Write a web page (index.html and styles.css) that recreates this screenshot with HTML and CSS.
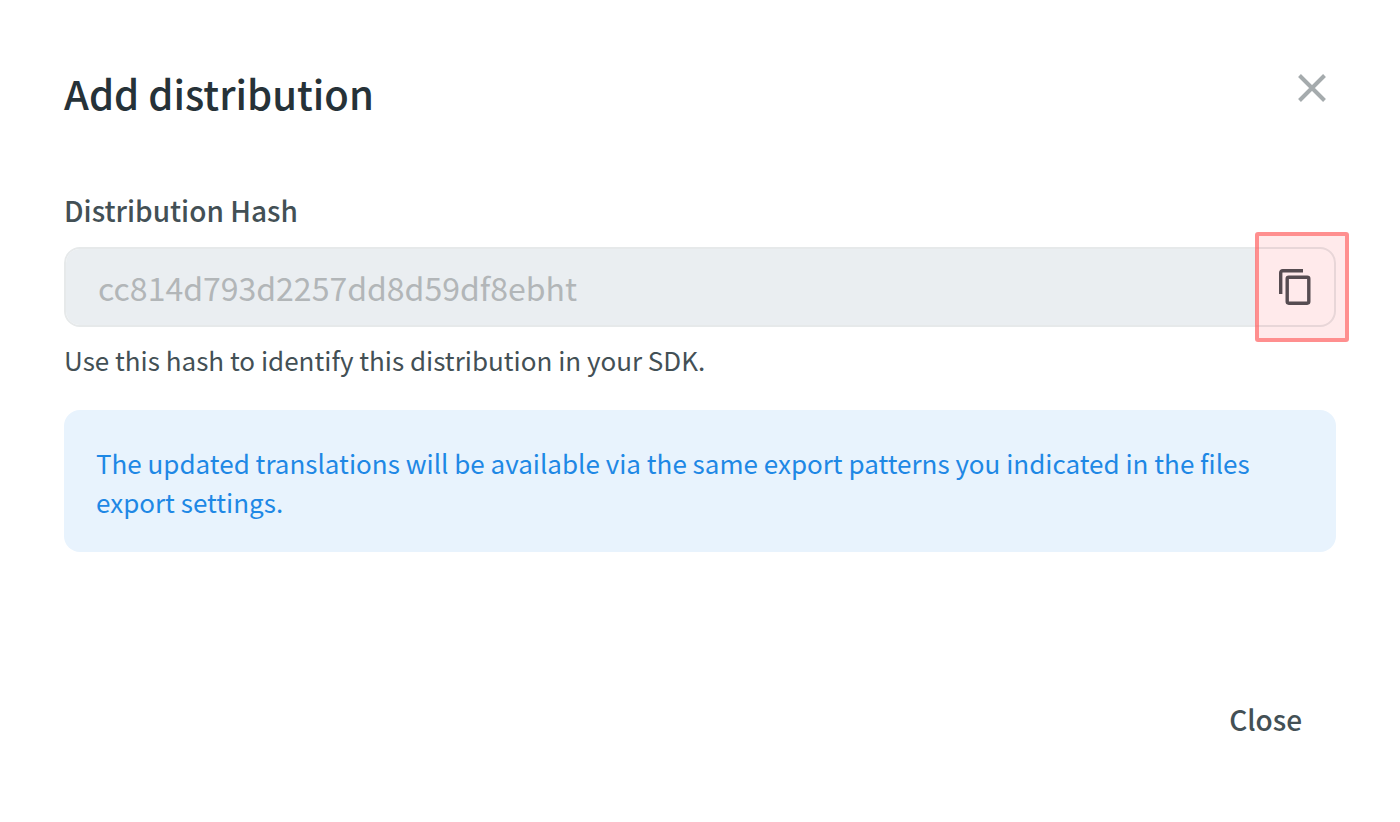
FILE: index.html
```html
<!DOCTYPE html>
<html lang="en">
<head>
<meta charset="utf-8">
<title>Add distribution</title>
<link rel="stylesheet" href="styles.css">
</head>
<body>
<main class="dialog">
  <header class="dialog-header">
    <h1 class="dialog-title"><span>Add distribution</span></h1>
    <button class="dismiss" aria-label="Dismiss">
      <svg width="28" height="28" viewBox="0 0 28 28"><path d="M1.5 1.5 26.5 26.5M26.5 1.5 1.5 26.5" fill="none" stroke="#a5abad" stroke-width="4"/></svg>
    </button>
  </header>
  <div class="label"><span>Distribution Hash</span></div>
  <div class="field">
    <div class="hash"><span>cc814d793d2257dd8d59df8ebht</span></div>
    <button class="copy" aria-label="Copy">
      <svg width="40" height="40" viewBox="0 0 40 40" fill="none" stroke="#424e53" stroke-width="3.4"><path d="M5.7 28V6.7a2 2 0 0 1 2-2H28"/><rect x="12.2" y="11.2" width="21.6" height="26" rx="1.6"/></svg>
    </button>
    <div class="highlight"></div>
  </div>
  <p class="hint"><span>Use this hash to identify this distribution in your SDK.</span></p>
  <div class="notice"><span>The updated translations will be available via the same export patterns you indicated in the files<br>export settings.</span></div>
  <footer class="dialog-footer"><button class="close"><span>Close</span></button></footer>
</main>
</body>
</html>
```
FILE: styles.css
```css
* { box-sizing: border-box; }
body {
  margin: 0;
  background: #fff;
  font-family: "Noto Sans CJK SC", "Noto Sans", sans-serif;
  color: #435055;
}
button {
  padding: 0;
  border: 0;
  background: none;
  font: inherit;
  color: inherit;
}
svg { display: block; }
.dialog {
  display: flex;
  flex-direction: column;
  height: 822px;
  padding: 64px 64px 0;
}
.dialog-header {
  display: flex;
  justify-content: space-between;
  align-items: flex-start;
  height: 128px;
}
.dialog-title {
  margin: 0;
  font-size: 40px;
  line-height: 58px;
  font-weight: 500;
  color: #263238;
}
.dismiss { margin: 10px 10px 0 0; }
.label {
  height: 55px;
  font-size: 28px;
  line-height: 37px;
  font-weight: 500;
}
.field {
  position: relative;
  display: flex;
  height: 80px;
  border: 2px solid #e6e9ea;
  border-radius: 16px;
}
.hash {
  flex: 1;
  padding-left: 32px;
  border-radius: 14px 0 0 14px;
  background: #eaeef1;
  font-size: 32px;
  line-height: 76px;
  color: #b2b6b8;
}
.copy {
  display: flex;
  align-items: center;
  justify-content: center;
  width: 78px;
  padding-bottom: 2px;
}
.highlight {
  position: absolute;
  top: -17px;
  right: -15px;
  width: 94px;
  height: 110px;
  border: 4px solid rgba(255, 95, 95, .7);
  border-radius: 3px;
  background: rgba(255, 60, 70, .11);
  background-clip: padding-box;
}
.hint {
  height: 83px;
  margin: 0;
  padding-top: 13px;
  font-size: 26px;
  line-height: 39px;
}
.notice {
  height: 142px;
  padding: 33px 32px;
  border-radius: 16px;
  background: #e8f3fd;
  font-size: 26px;
  line-height: 39px;
  white-space: nowrap;
  color: #1e88e5;
}
.dialog-footer {
  display: flex;
  justify-content: flex-end;
  padding: 147px 34px 0 0;
}
.close {
  font-size: 28px;
  line-height: 40px;
  font-weight: 500;
}
```
